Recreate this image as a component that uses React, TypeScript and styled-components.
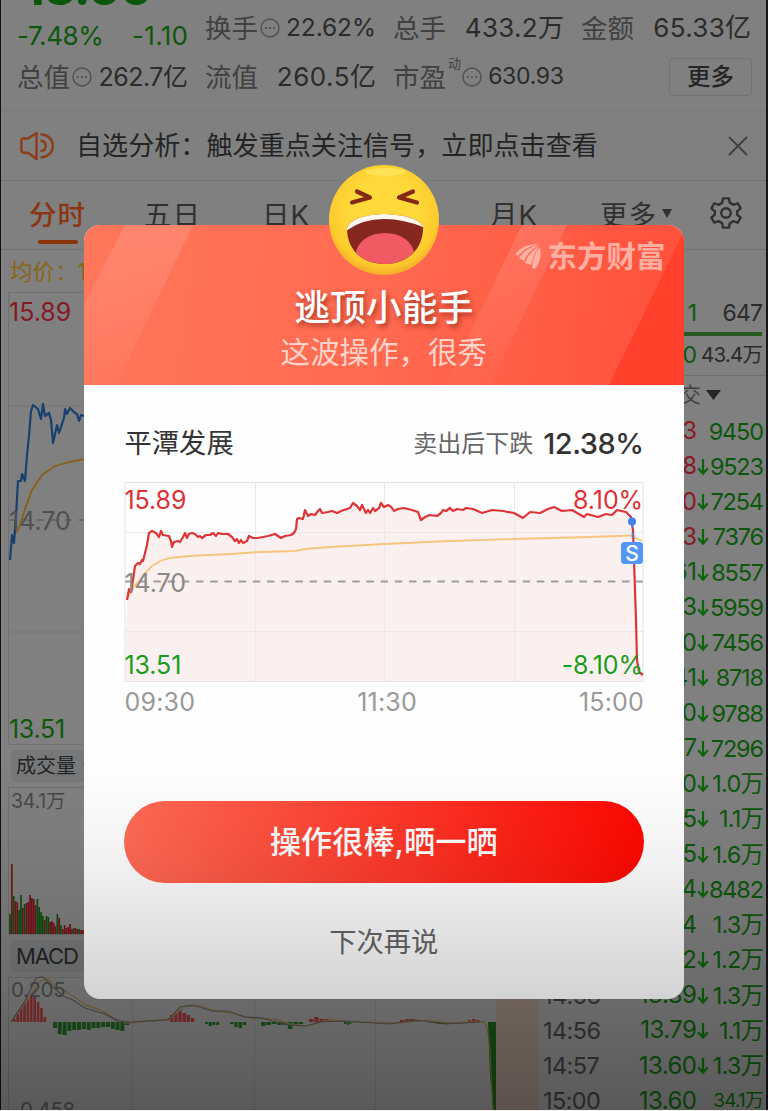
import React from "react";
import styled, { createGlobalStyle } from "styled-components";

const Global = createGlobalStyle`
  * { box-sizing: border-box; }
  html, body { margin: 0; padding: 0; background: #fff; }
  body { font-family: Inter, "Noto Sans CJK SC", sans-serif; }
`;

const Screen = styled.div`
  position: relative;
  width: 768px;
  height: 1111px;
  overflow: hidden;
  background: #808080;
  border-bottom: 1px solid #f4f0f0;
  color: #2b2b2b;
`;

const EdgeShade = styled.div`
  position: absolute;
  inset: 0;
  border-left: 1px solid #111;
  border-right: 2px solid #161616;
`;

const BottomShade = styled.div`
  position: absolute;
  left: 0;
  right: 0;
  top: 760px;
  bottom: 0;
  pointer-events: none;
  background: linear-gradient(180deg, rgba(0, 0, 0, 0) 0%, rgba(0, 0, 0, 0.04) 25%, rgba(0, 0, 0, 0.165) 67%, rgba(0, 0, 0, 0.3) 100%);
`;

const Txt = styled.span<{ $s: number; $c?: string; $w?: number; $ls?: number }>`
  font-size: ${(p) => p.$s}px;
  color: ${(p) => p.$c ?? "inherit"};
  font-weight: ${(p) => p.$w ?? 400};
  letter-spacing: ${(p) => p.$ls ?? 0}px;
  margin-right: ${(p) => -(p.$ls ?? 0)}px;
  line-height: 1.2;
  white-space: nowrap;
`;

/* ---------- quote header ---------- */

const Quote = styled.section`
  display: flex;
  gap: 17px;
  height: 111px;
  padding-left: 17px;
  border-bottom: 1px solid #797979;
`;

const QuoteLead = styled.div`
  width: 171px;
  display: flex;
  flex-direction: column;
`;

const Price = styled.div`
  height: 50px;
  margin-top: -38px;
  padding-left: 6px;
  font-size: 51px;
  line-height: 50px;
  font-weight: 700;
  letter-spacing: -1.6px;
  color: #0a560a;
`;

const Stat = styled.div<{ $h: number }>`
  display: flex;
  align-items: center;
  justify-content: space-between;
  height: ${(p) => p.$h}px;
`;

const StatLabel = styled.span`
  display: flex;
  align-items: center;
  gap: 2px;
  font-size: 26.5px;
  line-height: 30px;
  color: #414141;
`;

const Sup = styled.sup`
  align-self: flex-start;
  margin-top: -7px;
  margin-right: -1px;
  font-size: 13px;
  line-height: 16px;
`;

const StatGrid = styled.div`
  display: grid;
  grid-template-columns: 171px 171px 170px;
  grid-template-rows: 48px 50px;
  column-gap: 17px;
  padding-top: 4px;
`;

const MoreButton = styled.button`
  justify-self: end;
  align-self: center;
  width: 83px;
  height: 38px;
  margin-right: -1px;
  padding: 0;
  border: 1px solid #727272;
  border-radius: 4px;
  background: transparent;
  font: 500 23.5px/34px Inter, "Noto Sans CJK SC", sans-serif;
  color: #252525;
`;

const Dots = () => (
  <svg width="20" height="20" viewBox="0 0 20 20">
    <circle cx="10" cy="10" r="9" fill="none" stroke="#505050" strokeWidth="1.4" />
    <circle cx="5.8" cy="10" r="1.1" fill="#4a4a4a" />
    <circle cx="10" cy="10" r="1.1" fill="#4a4a4a" />
    <circle cx="14.2" cy="10" r="1.1" fill="#4a4a4a" />
  </svg>
);

/* ---------- notice and tabs ---------- */

const Notice = styled.section`
  display: flex;
  align-items: center;
  height: 70px;
  padding: 0 20px 0 19px;
  border-bottom: 1px solid #737373;
`;

const NoticeText = styled.p`
  flex: 1;
  margin: 0 0 0 20px;
  font-size: 26.1px;
  line-height: 32px;
  white-space: nowrap;
  color: #242424;
`;

const Tabs = styled.nav`
  display: grid;
  grid-template-columns: 115px 118px 114px 114px 110px 100px 1fr;
  height: 69px;
  padding-left: 29px;
  border-bottom: 1px solid #707070;
`;

const Tab = styled.div<{ $active?: boolean }>`
  display: flex;
  align-items: center;
  gap: 5px;
  height: 65px;
  padding-bottom: 1px;
  font-size: 27.5px;
  letter-spacing: 1px;
  white-space: nowrap;
  font-weight: ${(p) => (p.$active ? 500 : 400)};
  color: ${(p) => (p.$active ? "#8c3512" : "#303030")};
`;

const TabLine = styled.i`
  display: block;
  width: 40px;
  height: 4px;
  margin: -6px 0 0 9px;
  border-radius: 2px;
  background: #8a3208;
`;

/* ---------- market area behind the dialog ---------- */

const Market = styled.section`
  display: flex;
  height: 861px;
`;

const Charts = styled.div`
  width: 539px;
  padding-left: 8px;
`;

const AvgRow = styled.div`
  height: 42px;
  padding: 0 0 0 2px;
  display: flex;
  align-items: center;
`;

const Panel = styled.div<{ $h: number }>`
  position: relative;
  height: ${(p) => p.$h}px;
  border: solid #707070;
  border-width: 1px 0 1px 1px;
  svg { position: absolute; left: -9px; top: -1px; overflow: visible; }
`;

const PanelLabels = styled.div`
  position: relative;
  height: 100%;
  display: flex;
  flex-direction: column;
  justify-content: space-between;
  align-items: flex-start;
`;

const ChipRow = styled.div`
  display: flex;
  align-items: center;
  height: 42px;
`;

const Chip = styled.div`
  display: flex;
  align-items: center;
  gap: 7px;
  width: 96px;
  height: 32px;
  margin-left: 3px;
  padding-left: 5px;
  border-radius: 5px;
  background: #777879;
  color: #242424;
  white-space: nowrap;
`;

const Orders = styled.div`
  width: 227px;
  padding-top: 46px;
`;

const OrderRow = styled.div<{ $h: number }>`
  display: grid;
  grid-template-columns: 1fr 66px;
  align-items: center;
  justify-items: end;
  height: ${(p) => p.$h}px;
  padding-right: 3px;
`;

const GreenBar = styled.div`
  height: 4px;
  margin-right: 4px;
  background: #27591f;
`;

const TradeHead = styled.div`
  display: flex;
  align-items: center;
  justify-content: flex-end;
  gap: 5px;
  height: 39px;
  padding-right: 45px;
  border-top: 1px solid #707070;
`;

const Trade = styled.div`
  display: grid;
  grid-template-columns: 1fr auto 13px 54px;
  align-items: center;
  height: 35.25px;
  padding: 0 2px 0 4px;
`;

const Volume = styled.div`
  display: flex;
  justify-content: flex-end;
`;

const GREEN = "#0d570d";
const RED = "#861a25";

type TradeItem = [string, string, boolean, string, string?];
const trades: TradeItem[] = [
  ["", "3", false, "9450", RED],
  ["", "8", true, "9523", RED],
  ["", "0", true, "7254", RED],
  ["", "3", true, "7376", RED],
  ["", "61", true, "8557"],
  ["", "3", true, "5959"],
  ["", "0", true, "7456"],
  ["", "41", true, "8718"],
  ["", "0", true, "9788"],
  ["", "7", true, "7296"],
  ["", "0", true, "1.0万"],
  ["", "5", true, "1.1万"],
  ["", "5", true, "1.6万"],
  ["", "4", true, "8482"],
  ["", "4", false, "1.3万"],
  ["", "2", true, "1.2万"],
  ["14:56", "13.89", true, "1.3万"],
  ["14:56", "13.79", true, "1.1万"],
  ["14:57", "13.60", true, "1.3万"],
  ["15:00", "13.60", false, "34.1万"],
];

const Down = () => (
  <svg width="12" height="18" viewBox="0 0 12 18" fill="none" stroke="#0c640c" strokeWidth="2.2">
    <path d="M6 1V15.5M1.2 10.2L6 15.6L10.8 10.2" />
  </svg>
);

const volumes = [
  [20, 1], [70, 0], [38, 1], [33, 0], [32, 0], [24, 1], [39, 1], [26, 0], [30, 1], [31, 0], [32, 0], [39, 0], [36, 0],
  [35, 0], [29, 0], [35, 1], [27, 1], [22, 1], [18, 1], [14, 0], [18, 1], [17, 1], [12, 0], [13, 0], [11, 0], [8, 0],
  [20, 1], [16, 0], [9, 1], [5, 0], [9, 0], [6, 0], [7, 0], [10, 0], [5, 0], [6, 1], [6, 0], [5, 0], [5, 1], [4, 0], [4, 0], [4, 0],
];

/* MACD histogram as [first x, last x, heights]; positive heights rise above the zero line */
const macd: [number, number, number[]][] = [
  [13, 47, [3, 8, 14, 20, 23, 25, 26, 20, 14, 5]],
  [53, 130, [-6, -12, -13, -9, -8, -8, -7, -8, -6, -6, -5, -5, -7, -8, -9, -3]],
  [170, 195, [7, 9, 12, 9, 7, 4]],
  [205, 220, [-2, -4, -3, -3]],
  [230, 247, [-2, -5, -6, -3]],
  [261, 304, [-4, -3, -2, -3, -3, -7, -4, -2]],
  [309, 335, [3, 5, 3, 3, 2]],
  [344, 352, [-2, -3, -2]],
  [400, 420, [2, 3, 3, 2]],
  [430, 456, [-1, -2, -2, -1]],
  [468, 480, [2, 3, 2]],
];

/* ---------- dialog ---------- */

const Dialog = styled.div`
  position: absolute;
  left: 84px;
  top: 225px;
  width: 599.5px;
  height: 774px;
  border-radius: 16px;
  background: #fefefe;
`;

const Banner = styled.header`
  position: relative;
  display: flex;
  flex-direction: column;
  align-items: center;
  height: 160px;
  padding-top: 62px;
  border-radius: 16px 16px 0 0;
  overflow: hidden;
  background: linear-gradient(97deg, #ff775b 0%, #ff6a50 50%, #ff4f3a 100%);
`;

const Stripes = styled.svg`
  position: absolute;
  left: 0;
  top: 0;
`;

const Brand = styled.div`
  position: absolute;
  right: 18px;
  top: 13px;
  display: flex;
  align-items: center;
  gap: 6px;
  height: 36px;
  font-size: 29.5px;
  line-height: 36px;
  font-weight: 700;
  color: #ffb9ac;
  opacity: 0.9;
`;

const Title = styled.h1`
  position: relative;
  margin: 0;
  font-size: 35.8px;
  line-height: 42px;
  font-weight: 500;
  color: #fff;
  text-shadow: 2px 3px 5px rgba(110, 20, 0, 0.6);
`;

const Subtitle = styled.p`
  position: relative;
  margin: 2px 0 0;
  font-size: 29.5px;
  line-height: 42px;
  font-weight: 400;
  color: #ffd3ca;
`;

const Emoji = styled.svg`
  position: absolute;
  left: 244px;
  top: -61px;
`;

const Body = styled.div`
  display: flex;
  flex-direction: column;
  align-items: stretch;
  padding: 38px 39.5px 0;
`;

const Summary = styled.div`
  display: flex;
  align-items: center;
  justify-content: space-between;
  height: 42px;
  padding-left: 1px;
  color: #333;
`;

const SummaryValue = styled.div`
  display: flex;
  align-items: center;
  gap: 10px;
`;

const Plot = styled.div`
  position: relative;
  display: grid;
  grid-template-columns: 1fr 1fr;
  align-content: space-between;
  height: 200px;
  margin-top: 17px;
  padding: 3px 1px 2px 1px;
  svg { position: absolute; left: 0; top: 0; overflow: visible; }
`;

const PlotText = styled.div<{ $right?: boolean; $c: string }>`
  position: relative;
  text-align: ${(p) => (p.$right ? "right" : "left")};
  font-size: 25px;
  line-height: 30px;
  letter-spacing: -0.1px;
  color: ${(p) => p.$c};
`;

const PlotMid = styled(PlotText)`
  grid-column: 1 / 3;
`;

const Axis = styled.div`
  display: flex;
  justify-content: space-between;
  height: 40px;
  align-items: center;
  padding: 0 0 0 1px;
  font-size: 25px;
  letter-spacing: 0.2px;
  color: #999;
`;

const Share = styled.button`
  height: 82px;
  margin-top: 79px;
  padding: 0;
  border: 0;
  border-radius: 41px;
  background: linear-gradient(90deg, #ff6b55 0%, #ff3a2c 50%, #ff0800 100%);
  color: #fff;
  font: 500 31.2px/82px Inter, "Noto Sans CJK SC", sans-serif;
`;

const Later = styled.button`
  height: 42px;
  margin-top: 39px;
  padding: 0;
  border: 0;
  background: transparent;
  color: #666;
  font: 400 27.3px/42px Inter, "Noto Sans CJK SC", sans-serif;
`;

const redLine =
  "127,600 129,589 131,592 133,580 135,566 138,563 140,564 142,560 143,561 145,553 147,545 149,533 152,531 156,533 159,537 161,531 163,535 169,536 171,541 172,547 174,542 178,541 180,542 183,537 185,533 187,538 189,534 192,533 195,534 198,537 200,536 202,538 206,535 210,535 213,533 216,536 218,533 222,534 228,534 232,537 235,541 237,539 239,543 241,540 243,543 247,541 249,536 253,538 257,538 263,537 268,536 275,534 281,538 285,536 291,535 294,533 296,529 297,519 299,518 303,519 305,510 308,516 311,514 315,515 318,511 320,509 322,513 328,512 332,511 337,513 341,511 347,509 350,508 353,503 357,506 360,510 362,505 366,513 368,510 370,513 373,508 375,511 379,508 381,503 384,507 388,505 390,506 392,508 394,511 398,509 404,508 412,510 418,512 421,520 425,517 430,515 437,516 441,513 443,510 446,511 450,508 453,511 457,509 463,510 466,508 473,509 482,513 492,510 503,511 514,513 523,518 530,512 540,513 548,509 554,507 562,511 572,510 584,517 587,514 598,517 606,514 612,515 617,510 626,512 631,517 633,530 636,620 637,660 639,672 643,675";

const App = () => (
  <Screen>
    <Global />
    <Quote>
      <QuoteLead>
        <Price>13.60</Price>
        <Stat $h={48}>
          <Txt $s={26} $c={GREEN} $ls={-0.4}>-7.48%</Txt>
          <Txt $s={26} $c={GREEN} $ls={0.3}>-1.10</Txt>
        </Stat>
        <Stat $h={34}>
          <StatLabel>总值<Dots /></StatLabel>
          <Txt $s={25} $ls={-0.5}>262.7亿</Txt>
        </Stat>
      </QuoteLead>
      <StatGrid>
        <Stat $h={48}>
          <StatLabel>换手<Dots /></StatLabel>
          <Txt $s={24.5} $ls={-0.1}>22.62%</Txt>
        </Stat>
        <Stat $h={48}>
          <StatLabel>总手</StatLabel>
          <Txt $s={26} $ls={0.3}>433.2万</Txt>
        </Stat>
        <Stat $h={48}>
          <StatLabel>金额</StatLabel>
          <Txt $s={26} $ls={0.3}>65.33亿</Txt>
        </Stat>
        <Stat $h={50}>
          <StatLabel>流值</StatLabel>
          <Txt $s={26} $ls={0.5}>260.5亿</Txt>
        </Stat>
        <Stat $h={50}>
          <StatLabel>市盈<Sup>动</Sup><Dots /></StatLabel>
          <Txt $s={23} $ls={-0.3}>630.93</Txt>
        </Stat>
        <MoreButton>更多</MoreButton>
      </StatGrid>
    </Quote>

    <Notice>
      <svg width="37" height="32" viewBox="0 0 37 32" fill="none" stroke="#8a3d17" strokeWidth="2.4" strokeLinejoin="round" strokeLinecap="round">
        <path d="M17.5 3L9 8.5H4.5Q2.4 8.5 2.4 10.6V20.6Q2.4 22.7 4.5 22.7H9L17.5 29Z" />
        <path d="M22.5 4.5A11.4 11.4 0 0 1 22.5 27.3M22.5 10.8A5.2 5.2 0 0 1 22.5 21" />
      </svg>
      <NoticeText>自选分析：触发重点关注信号，立即点击查看</NoticeText>
      <svg width="20" height="20" viewBox="0 0 20 20" stroke="#3f3f3f" strokeWidth="1.8">
        <path d="M1 1L19 19M19 1L1 19" />
      </svg>
    </Notice>

    <Tabs>
      <div><Tab $active>分时</Tab><TabLine /></div>
      <Tab>五日</Tab>
      <Tab>日K</Tab>
      <Tab>周K</Tab>
      <Tab>月K</Tab>
      <Tab>
        更多
        <svg width="10" height="9" viewBox="0 0 10 9"><path d="M0 0H10L5 9Z" fill="#303030" /></svg>
      </Tab>
      <Tab>
        <svg width="36" height="36" viewBox="-1 -1 38 38" fill="none" stroke="#303030" strokeWidth="2.5" strokeLinejoin="round" style={{ marginLeft: 8 }}>
          <path d="M14.8 2.5H21.2L22 7.2L25.8 9.4L30.3 7.7L33.5 13.2L29.8 16.2V19.8L33.5 22.8L30.3 28.3L25.8 26.6L22 28.8L21.2 33.5H14.8L14 28.8L10.2 26.6L5.7 28.3L2.5 22.8L6.2 19.8V16.2L2.5 13.2L5.7 7.7L10.2 9.4L14 7.2Z" />
          <circle cx="18" cy="18" r="5" />
        </svg>
      </Tab>
    </Tabs>

    <Market>
      <Charts>
        <AvgRow><Txt $s={22.5} $c="#8a6516">均价：1</Txt></AvgRow>
        <Panel $h={453}>
          <svg width="540" height="453" viewBox="0 291 540 453" fill="none">
            <path d="M9 405H539M9 631H539" stroke="#777" />
            <path d="M9 519H539" stroke="#606060" strokeWidth="1.5" strokeDasharray="7 7" />
            <polyline stroke="#87601c" strokeWidth="1.8" points="16,532 19,527 25,508 32,489 42,474 55,465 70,461 84,458 120,455" />
            <polyline stroke="#17406f" strokeWidth="2.2" strokeLinejoin="round" points="10,559 12,534 14,542 16,515 18,480 21,480 22,473 25,480 27,454 29,435 31,410 33,404 38,408 41,418 43,403 45,415 49,412 51,419 53,442 57,424 59,432 64,417 65,408 67,413 70,407 75,412 77,413 79,420 81,414 84,415" />
          </svg>
          <PanelLabels style={{ padding: "4px 0 0" }}>
            <Txt $s={25} $c={RED}>15.89</Txt>
            <Txt $s={25} $c="#505050">14.70</Txt>
            <Txt $s={25} $c={GREEN} $ls={-0.3}>13.51</Txt>
          </PanelLabels>
        </Panel>
        <ChipRow>
          <Chip><Txt $s={20}>成交量</Txt><svg width="9" height="7"><path d="M0 0H9L4.5 7Z" fill="#333" /></svg></Chip>
        </ChipRow>
        <Panel $h={148}>
          <svg width="540" height="148" viewBox="0 786 540 148">
            {volumes.map(([h, g], i) => (
              <rect key={i} x={9.2 + i * 1.82} y={933 - h} width="1.7" height={h} fill={g ? "#0d500d" : "#74141a"} />
            ))}
          </svg>
          <PanelLabels style={{ padding: "2px 0 0 2px" }}>
            <Txt $s={19.5} $c="#484848" $ls={-0.2}>34.1万</Txt>
          </PanelLabels>
        </Panel>
        <ChipRow>
          <Chip><Txt $s={22} $ls={-1.1}>MACD</Txt><svg width="9" height="7"><path d="M0 0H9L4.5 7Z" fill="#333" /></svg></Chip>
        </ChipRow>
        <Panel $h={160}>
          <svg width="540" height="160" viewBox="0 976 540 160" fill="none">
            <rect x="496" y="977" width="43" height="160" fill="#84756d" />
            <path d="M132.5 976V1130M254.5 976V1130M375.5 976V1130" stroke="#757575" />
            {macd.map(([from, to, hs], k) =>
              hs.map((h, i) => {
                const step = (to - from) / hs.length;
                return <rect key={`${k}-${i}`} x={from + i * step} y={h > 0 ? 1021 - h : 1021} width={Math.max(step - 0.8, 2)} height={Math.abs(h)} fill={h > 0 ? "#862f2f" : "#1b541d"} />;
              })
            )}
            <polyline stroke="#806b43" strokeWidth="1.4" points="11,1021 28,998 40,980 48,978 56,985 70,993 86,1004 100,1009 115,1018 128,1022 170,1018 185,1005 200,1005 215,1010 232,1012 250,1017 275,1018 290,1023 306,1025 330,1019 355,1021 400,1022 425,1019 450,1022 470,1021 485,1021" />
            <polyline stroke="#4f4f4f" strokeWidth="1.2" points="11,1021 25,1000 36,977 43,976 52,985 63,995 73,999 85,1007 105,1013 118,1020 130,1021 168,1019 180,1006 193,1004 212,1010 228,1010 245,1016 262,1017 288,1024 306,1025 320,1021 345,1020 390,1023 415,1019 445,1023 480,1021" />
            <path d="M488 1021L490 1075L494 1111H496V1021Z" fill="#174d16" />
            <path d="M483 1021Q488 1021 490 1050L493 1111" stroke="#6c6220" strokeWidth="1.2" />
          </svg>
          <PanelLabels style={{ padding: "0 0 13px 2px" }}>
            <Txt $s={20.5} $c="#4b4b4b" $ls={-0.4}>0.205</Txt>
            <Txt $s={20.5} $c="#4b4b4b" $ls={-0.4}>-0.458</Txt>
          </PanelLabels>
        </Panel>
      </Charts>

      <Orders>
        <OrderRow $h={36}>
          <Txt $s={23} $c={GREEN}>1</Txt>
          <Txt $s={23} $ls={-0.8}>647</Txt>
        </OrderRow>
        <GreenBar />
        <OrderRow $h={39}>
          <Txt $s={23} $c={GREEN}>0</Txt>
          <Txt $s={20.5} $ls={-0.8}>43.4万</Txt>
        </OrderRow>
        <TradeHead>
          <Txt $s={21} $c="#404040">交</Txt>
          <svg width="15" height="10"><path d="M0 0H15L7.5 10Z" fill="#242424" /></svg>
        </TradeHead>
        {trades.map(([time, price, down, vol, tone], i) => (
          <Trade key={i}>
            <Txt $s={23.5} $c="#373737" $ls={-0.6}>{time}</Txt>
            <Txt $s={24} $c={tone ?? GREEN} $ls={-0.5}>{price}</Txt>
            {down ? <Down /> : <i />}
            <Volume>
              <Txt $s={vol.startsWith("34") ? 19 : 23.5} $c={GREEN} $ls={vol.endsWith("万") ? -0.8 : -1.2}>{vol}</Txt>
            </Volume>
          </Trade>
        ))}
      </Orders>
    </Market>
    <EdgeShade />

    <Dialog>
      <Banner>
        <Stripes width="600" height="160" viewBox="0 0 600 160">
          <defs>
            <linearGradient id="band" x1="0" y1="0" x2="0" y2="1">
              <stop offset="0" stopColor="#fff" stopOpacity="0.13" />
              <stop offset="1" stopColor="#fff" stopOpacity="0.02" />
            </linearGradient>
          </defs>
          <path d="M41 0H109L32 160H0V80Z" fill="url(#band)" />
          <path d="M438 0H483L406 160H361Z" fill="url(#band)" />
          <path d="M600 6V160H525Z" fill="#ff412c" />
        </Stripes>
        <Brand>
          <svg width="26" height="27" viewBox="0 0 26 27" fill="#ffb9ac">
            <path d="M0 11Q10 0 23 1Q10 4 3 13Z" />
            <path d="M4 15Q12 4 24 2Q13 8 9 18Z" />
            <path d="M10 20Q14 9 24 3Q19 10 16 22Z" />
            <path d="M17 25Q18 12 24.5 4Q28 16 20 26Z" />
          </svg>
          东方财富
        </Brand>
        <Title>逃顶小能手</Title>
        <Subtitle>这波操作，很秀</Subtitle>
      </Banner>
      <Emoji width="112" height="112" viewBox="328 164 112 112">
        <defs>
          <radialGradient id="face" cx="0.5" cy="0.42" r="0.58">
            <stop offset="0.5" stopColor="#ffd93a" />
            <stop offset="0.85" stopColor="#fdcb2c" />
            <stop offset="1" stopColor="#f2ae2a" />
          </radialGradient>
          <clipPath id="mouth">
            <path d="M347 228Q352 215 384 214Q416 215 423 226C424 248 408 264 385 264C362 264 347 250 347 228Z" />
          </clipPath>
        </defs>
        <circle cx="384" cy="220" r="55" fill="url(#face)" />
        <ellipse cx="386" cy="172" rx="20" ry="4" fill="#ffe765" opacity="0.7" />
        <g fill="none" stroke="#862817" strokeWidth="4.2" strokeLinecap="round" strokeLinejoin="round">
          <path d="M357 191.5L370 197.5L352 202.5" />
          <path d="M413 191.5L399 197.5L417 202.5" />
        </g>
        <g clipPath="url(#mouth)">
          <rect x="345" y="212" width="80" height="54" fill="#862820" />
          <path d="M345 212H425V228Q405 219 384 219Q362 219 346 231Z" fill="#fff8ee" />
          <ellipse cx="385" cy="254" rx="29" ry="21" fill="#f05a62" />
        </g>
      </Emoji>
      <Body>
        <Summary>
          <Txt $s={27.3}>平潭发展</Txt>
          <SummaryValue>
            <Txt $s={24} $c="#666">卖出后下跌</Txt>
            <Txt $s={29} $w={500} $ls={-0.5}>12.38%</Txt>
          </SummaryValue>
        </Summary>
        <Plot>
          <svg width="520" height="200" viewBox="124 482 520 200" fill="none">
            <polygon points={`125,682 ${redLine} 643,682`} fill="#fbf0f0" />
            <path d="M125 532.5H643M125 631.5H643M255.5 482V682M384.5 482V682M514.5 482V682" stroke="#ece7ea" />
            <rect x="125" y="482.5" width="518" height="199" stroke="#e6e1e1" />
            <path d="M125 581.5H643" stroke="#a09c9c" strokeWidth="1.8" strokeDasharray="7.5 6.7" />
            <polyline stroke="#f5c57c" strokeWidth="1.8" points="128,597 131,591 137,583 145,573 152,566 160,561 170,558 190,556 230,554 260,552 295,551 305,549 330,547 385,544 450,541 514,539 590,537 631,535.5 636,538 642,541" />
            <polyline stroke="#df3437" strokeWidth="2.2" strokeLinejoin="round" points={redLine} />
            <path d="M632.5 522V545" stroke="#4587ee" strokeWidth="1.6" strokeDasharray="6 4" />
            <circle cx="632" cy="521.5" r="4" fill="#3f83f0" />
            <rect x="621" y="542" width="22" height="22" rx="3.5" fill="#5297f5" />
            <text x="632" y="560.5" textAnchor="middle" fontFamily="Inter, sans-serif" fontSize="21" fontWeight="500" fill="#fff">S</text>
          </svg>
          <PlotText $c="#df3035">15.89</PlotText>
          <PlotText $c="#df3035" $right>8.10%</PlotText>
          <PlotMid $c="#8c8888">14.70</PlotMid>
          <PlotText $c="#199c1c">13.51</PlotText>
          <PlotText $c="#199c1c" $right>-8.10%</PlotText>
        </Plot>
        <Axis><span>09:30</span><span>11:30</span><span>15:00</span></Axis>
        <Share>操作很棒,晒一晒</Share>
        <Later>下次再说</Later>
      </Body>
    </Dialog>
    <BottomShade />
  </Screen>
);

export default App;
